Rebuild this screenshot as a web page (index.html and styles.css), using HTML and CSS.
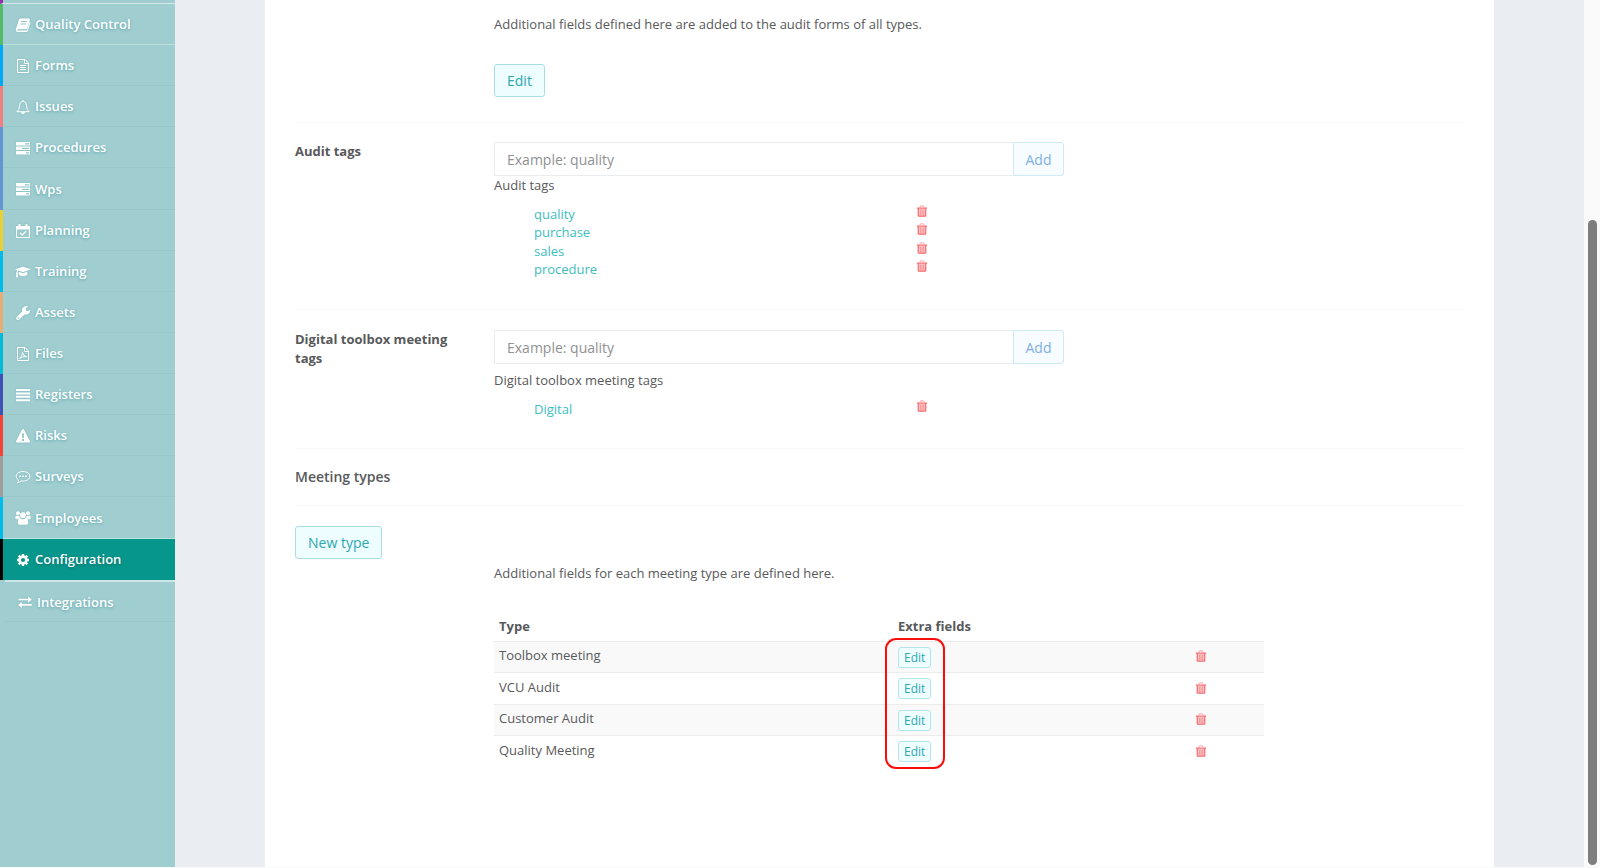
FILE: index.html
```html
<!DOCTYPE html>
<html lang="en">
<head>
<meta charset="utf-8">
<title>Configuration</title>
<link rel="stylesheet" href="styles.css">
</head>
<body>
<svg class="sprite" aria-hidden="true">
  <symbol id="trash" viewBox="0 0 12 14">
    <path d="M4 2.6V1.7q0-.8.8-.8h2.4q.8 0 .8.800v.9" fill="none" stroke="#f99a9d" stroke-width="1"/>
    <path d="M1.500 4h9v7.500q0 1-1 1h-7q-1 0-1-1z" fill="#fbc3c5"/>
    <path d="M2 4v7.200q0 .8.800.8h6.400q.8 0 .8-.800V4M.5 3.400h11" fill="none" stroke="#f57074" stroke-width="1.300"/>
    <path d="M4.400 5v6M6 5v6M7.600 5v6" stroke="#f88e92" stroke-width=".8"/>
  </symbol>
  <symbol id="tasks" viewBox="0 0 16 16">
    <path fill="currentColor" fill-rule="evenodd" d="M1.500 2h13q.5 0 .5.500v2.500q0 .5-.5.500h-13q-.5 0-.5-.500V2.500q0-.5.500-.500zM10 3.200v1.200h4V3.200zM1.500 6.500h13q.5 0 .5.500v2.500q0 .5-.5.500h-13q-.5 0-.5-.500V7q0-.5.500-.500zM7 7.700v1.200h7V7.700zM1.500 11h13q.5 0 .5.500V14q0 .5-.5.500h-13q-.5 0-.5-.500v-2.500q0-.5.500-.500zM11 12.200v1.200h3v-1.200z"/>
  </symbol>
</svg>
<nav class="sidebar">
  <div class="stub"></div>
  <a class="item green light" href="#"><svg class="icon" viewBox="0 0 16 16"><path fill="currentColor" fill-rule="evenodd" d="M5.800 1.500h8q1.300 0 1 1.300l-2.500 8.200q-.4 1.300-1.700 1.300H3q-1 0-.9.700.1.600 1 .6h8.200q.6 0 .8-.600l2.600-8.500q.9.400.6 1.500l-2.400 7.800q-.4 1.200-1.700 1.200H2.900Q1 15 .8 13.200q-.1-.6.100-1.200L3.800 2.900Q4.300 1.500 5.800 1.500zM6.200 4l-.3 1h5.700l.3-1zM5.500 6.400l-.3 1h5.700l.3-1z"/></svg>Quality Control</a>
  <a class="item blue" href="#"><svg class="icon" viewBox="0 0 16 16"><path fill="none" stroke="currentColor" d="M2.500 1.500h7.500l3.500 3.500v9.500h-11zM9.500 1.500v4h4M5 7.500h6M5 9.500h6M5 11.500h6"/></svg>Forms</a>
  <a class="item coral" href="#"><svg class="icon" viewBox="0 0 16 16"><path fill="none" stroke="currentColor" d="M8 2Q4.500 2.500 4.500 6.500q0 4.500-2.700 6.200h12.400Q11.500 11 11.500 6.500 11.500 2.500 8 2zM8 .8V2"/><path fill="currentColor" d="M6 13h4q-.2 2-2 2t-2-2z"/></svg>Issues</a>
  <a class="item steel" href="#"><svg class="icon"><use href="#tasks"/></svg>Procedures</a>
  <a class="item steel tall" href="#"><svg class="icon"><use href="#tasks"/></svg>Wps</a>
  <a class="item yellow" href="#"><svg class="icon" viewBox="0 0 16 16"><path fill="none" stroke="currentColor" stroke-width="1.100" d="M1.600 3.500h12.800v11H1.600zM1.600 6h12.800"/><path fill="currentColor" d="M1.500 3h13v3h-13z"/><path fill="none" stroke="currentColor" stroke-width="2" d="M4.500 1v3.500M11.500 1v3.500"/><path fill="none" stroke="currentColor" stroke-width="1.300" d="M5 9.800l2.200 2.200 4-4"/></svg>Planning</a>
  <a class="item sky" href="#"><svg class="icon" viewBox="0 0 18 16"><path fill="currentColor" d="M9 2l9 3-9 3.200L3.800 6.400q-.9.700-1 2.100.7.600.2 1.500l.5 4H1l.5-4q-.6-.9.200-1.600.1-1.500.8-2.400L0 5zM4.200 7.800L9 9.500l4.800-1.700.2 2.700Q12.500 12.800 9 12.800T4 10.500z"/></svg>Training</a>
  <a class="item sand" href="#"><svg class="icon" viewBox="0 0 16 16"><path fill="currentColor" fill-rule="evenodd" d="M7 6.800Q6.300 3.500 8.800 1.900q2.200-1.400 4.600-.4L10.800 3.300v2l1.800 1 2.600-1.600q.1 3.300-2.400 4.400-1.400.6-3 .1L4.200 14.400q-1.300 1.200-2.500 0t0-2.500zM3.200 12.200a.8.800 0 100 1.600.8.800 0 000-1.600z"/></svg>Assets</a>
  <a class="item cyan" href="#"><svg class="icon" viewBox="0 0 16 16"><path fill="none" stroke="currentColor" d="M2.500 1.500h7.500l3.500 3.500v9.500h-11zM9.500 1.500v4h4"/><path fill="none" stroke="currentColor" stroke-width=".9" d="M4.500 12.500Q7.500 10 7.500 6.500q.5 3.500 4 4.200Q8 9.800 4.500 12.500z"/></svg>Files</a>
  <a class="item indigo" href="#"><svg class="icon" viewBox="0 0 16 16"><path stroke="currentColor" stroke-width="2" d="M1 3h14M1 6.400h14M1 9.800h14M1 13.200h14"/></svg>Registers</a>
  <a class="item red" href="#"><svg class="icon" viewBox="0 0 16 16"><path fill="currentColor" fill-rule="evenodd" d="M8 1q.6 0 .9.500l6 11.500q.7 1.400-.9 1.500H2Q.4 14.400 1.100 13l6-11.500Q7.400 1 8 1zM6.900 5.500l.3 4.500h1.600l.3-4.500zM7 11v1.900h2V11z"/></svg>Risks</a>
  <a class="item grey" href="#"><svg class="icon" viewBox="0 0 16 16"><path fill="none" stroke="currentColor" d="M8 2.500c4 0 6.800 2 6.800 4.800S12 12 8 12q-1 0-1.700-.1-1.800 1.700-4 1.900 1.200-1.300 1.200-2.800Q1.200 9.600 1.200 7.300C1.200 4.500 4 2.500 8 2.500z"/><path stroke="currentColor" stroke-width="1.600" d="M4.200 7.300h1.700M7.200 7.300h1.700M10.200 7.300h1.700"/></svg>Surveys</a>
  <a class="item sky tall light" href="#"><svg class="icon" viewBox="0 0 16 16"><g fill="currentColor"><circle cx="3" cy="3.200" r="2"/><circle cx="13" cy="3.200" r="2"/><circle cx="8" cy="5.200" r="2.900"/><path d="M.3 8.500Q.2 5.300 1.500 5.500q1.500.9 3 .2 0 1.500.7 2.500-1.200 0-2 1H1.500Q.4 9.200.3 8.500zM15.700 8.500q.1-3.200-1.200-3-1.500.9-3 .2 0 1.500-.7 2.500 1.200 0 2 1h1.700q1.100 0 1.200-.700zM5.300 8.300Q8 10.200 10.700 8.300q2.500.2 2.500 4.500 0 1.900-2 1.900H4.800q-2 0-2-1.900 0-4.300 2.500-4.500z"/></g></svg>Employees</a>
  <a class="item active" href="#" aria-current="page"><svg class="icon" viewBox="0 0 16 16"><circle cx="8" cy="8" r="3.400" fill="none" stroke="currentColor" stroke-width="2.600"/><path stroke="currentColor" stroke-width="2.400" d="M8 2v2.400M8 11.600v2.400M2 8h2.400M11.600 8h2.400M3.700 3.700l1.600 1.600M10.700 10.700l1.600 1.600M3.700 12.300l1.600-1.600M10.700 5.300l1.600-1.600"/></svg>Configuration</a>
  <a class="item last" href="#"><svg class="icon" viewBox="0 0 16 16"><path fill="currentColor" d="M1.500 4.700H11V2.500l3.800 3-3.800 3V6.300H1.500zM14.800 10.100H5V7.900l-3.800 3 3.800 3v-2.200h9.800z"/></svg>Integrations</a>
</nav>
<main class="panel">
  <section class="row intro">
    <div></div>
    <div>
      <p>Additional fields defined here are added to the audit forms of all types.</p>
      <button class="btn" type="button">Edit</button>
    </div>
  </section>
  <section class="row audit">
    <label class="label" for="audit-tag">Audit tags</label>
    <div>
      <div class="group"><input id="audit-tag" type="text" placeholder="Example: quality"><button class="add" type="button">Add</button></div>
      <p>Audit tags</p>
      <ul class="tags">
        <li><a href="#">quality</a><button class="del" type="button" aria-label="Delete quality"><svg><use href="#trash"/></svg></button></li>
        <li><a href="#">purchase</a><button class="del" type="button" aria-label="Delete purchase"><svg><use href="#trash"/></svg></button></li>
        <li><a href="#">sales</a><button class="del" type="button" aria-label="Delete sales"><svg><use href="#trash"/></svg></button></li>
        <li><a href="#">procedure</a><button class="del" type="button" aria-label="Delete procedure"><svg><use href="#trash"/></svg></button></li>
      </ul>
    </div>
  </section>
  <section class="row toolbox">
    <label class="label" for="toolbox-tag">Digital toolbox meeting tags</label>
    <div>
      <div class="group"><input id="toolbox-tag" type="text" placeholder="Example: quality"><button class="add" type="button">Add</button></div>
      <p>Digital toolbox meeting tags</p>
      <ul class="tags">
        <li><a href="#">Digital</a><button class="del" type="button" aria-label="Delete Digital"><svg><use href="#trash"/></svg></button></li>
      </ul>
    </div>
  </section>
  <h2 class="heading">Meeting types</h2>
  <section class="types">
    <button class="btn" type="button">New type</button>
    <div class="listing">
      <p>Additional fields for each meeting type are defined here.</p>
      <div class="table-wrap">
        <table>
          <colgroup><col class="c-type"><col class="c-extra"><col></colgroup>
          <thead><tr><th>Type</th><th>Extra fields</th><th></th></tr></thead>
          <tbody>
            <tr><td>Toolbox meeting</td><td><button class="mini" type="button">Edit</button></td><td><button class="del" type="button" aria-label="Delete Toolbox meeting"><svg><use href="#trash"/></svg></button></td></tr>
            <tr><td>VCU Audit</td><td><button class="mini" type="button">Edit</button></td><td><button class="del" type="button" aria-label="Delete VCU Audit"><svg><use href="#trash"/></svg></button></td></tr>
            <tr><td>Customer Audit</td><td><button class="mini" type="button">Edit</button></td><td><button class="del" type="button" aria-label="Delete Customer Audit"><svg><use href="#trash"/></svg></button></td></tr>
            <tr><td>Quality Meeting</td><td><button class="mini" type="button">Edit</button></td><td><button class="del" type="button" aria-label="Delete Quality Meeting"><svg><use href="#trash"/></svg></button></td></tr>
          </tbody>
        </table>
        <div class="highlight"></div>
      </div>
    </div>
  </section>
</main>
<div class="scrollbar"><div class="thumb"></div></div>
</body>
</html>
```
FILE: styles.css
```css
* { box-sizing: border-box; }

body {
  margin: 0;
  display: flex;
  min-height: 100vh;
  background: #eaeef3;
  border-bottom: 1px solid #f8fafb;
  color: #58595b;
  font: 13px/19px "Open Sans", "Noto Sans", sans-serif;
}

p, h2, ul { margin: 0; padding: 0; }
button { font-family: inherit; cursor: pointer; }
.sprite { position: absolute; width: 0; height: 0; }

.sidebar {
  flex: none;
  width: 175px;
  background: #a0cdd0;
}
.stub {
  height: 4px;
  border-left: 3px solid #9c27b0;
  border-bottom: 1px solid #d3eae9;
}
.item {
  display: flex;
  align-items: center;
  gap: 4px;
  height: 41px;
  padding-left: 12px;
  border-left: 3px solid;
  box-shadow: inset 0 -1px #98c6c9;
  color: #fff;
  font-weight: 600;
  text-decoration: none;
  text-shadow: 0 1px 3px #5fa8ac;
}
.icon {
  flex: none;
  width: 16px;
  height: 16px;
  color: #fff;
  filter: drop-shadow(0 0 1px #84bdc0);
}
.tall { height: 42px; }
.light { box-shadow: inset 0 -1px #bbdfda; }
.green { border-left-color: #55b96a; }
.blue { border-left-color: #03a9f4; }
.coral { border-left-color: #f08080; }
.steel { border-left-color: #6495d2; }
.yellow { border-left-color: #e9d035; }
.sky { border-left-color: #00bce9; }
.sand { border-left-color: #e5ae74; }
.cyan { border-left-color: #00bcd4; }
.indigo { border-left-color: #3f51b5; }
.red { border-left-color: #f44336; }
.grey { border-left-color: #9e9e9e; }
.active {
  border-left-color: #000;
  background: #07968c;
  box-shadow: none;
  text-shadow: 0 1px 3px #056e67;
}
.active .icon { filter: none; }
.last {
  height: 42px;
  margin-left: 5px;
  border-left: 0;
  border-top: 2px solid #cfe6e8;
}

.panel {
  flex: 1;
  min-width: 0;
  margin: 0 90px;
  padding: 0 30px;
  background: #fff;
}
.row {
  display: grid;
  grid-template-columns: 199px minmax(0, 570px);
  border-bottom: 1px solid #f7f7f8;
}
.intro { padding: 15px 0 25px; }
.intro .btn { margin-top: 30px; }
.audit { padding: 19px 0 30px; }
.toolbox { padding: 20px 0 30px; }
.toolbox .group { margin-bottom: 7px; }
.label { padding-right: 40px; font-weight: 700; }

.btn {
  display: block;
  height: 33px;
  padding: 0 12px;
  border: 1px solid #a9dfe4;
  border-radius: 3px;
  background: #eefdff;
  color: #2ba7ad;
  font-size: 14px;
}
.group { display: flex; height: 34px; }
.group input {
  flex: 1;
  min-width: 0;
  padding: 0 12px;
  border: 1px solid #ebeced;
  border-right: 0;
  background: #fff;
  color: #58595b;
  font: 14px "Open Sans", "Noto Sans", sans-serif;
}
.group input::placeholder { color: #909193; opacity: 1; }
.add {
  width: 51px;
  padding: 0;
  border: 1px solid #cfeaf5;
  border-radius: 0 3px 3px 0;
  background: #f6fcff;
  color: #7fb0e0;
  font-size: 14px;
}

.tags { margin-top: 10px; padding-left: 40px; list-style: none; }
.tags li {
  display: grid;
  grid-template-columns: 382px auto;
  justify-content: start;
  height: 18px;
}
.tags li:nth-child(even) { height: 19px; }
.tags a { color: #3dbdc0; text-decoration: none; }
.del {
  display: block;
  width: 12px;
  height: 13px;
  padding: 0;
  border: 0;
  background: none;
}
.del svg { display: block; width: 12px; height: 13px; }

.heading {
  padding: 18px 0 19px;
  border-bottom: 1px solid #f7f7f8;
  font-size: 14px;
  line-height: 19px;
  font-weight: 600;
}
.types { padding-top: 20px; }
.listing { padding-left: 199px; padding-top: 5px; }
.table-wrap { position: relative; max-width: 770px; margin-top: 29px; }
table { width: 100%; border-collapse: collapse; table-layout: fixed; }
.c-type { width: 399px; }
.c-extra { width: 297px; }
th, td { padding: 0 5px; text-align: left; vertical-align: middle; }
th { height: 29px; }
td { height: 31px; border-top: 1px solid #ececed; }
td:first-child { padding-bottom: 2px; }
td:nth-child(2) { padding-top: 1px; }
tbody tr:nth-child(even) td { height: 32px; }
tbody tr:nth-child(odd) { background: #f9f9f9; }
.mini {
  display: block;
  height: 21px;
  padding: 0 5px;
  border: 1px solid #b5e5e9;
  border-radius: 3px;
  background: #eefdff;
  color: #2ba7ad;
  font-size: 12px;
}
.highlight {
  position: absolute;
  left: 391px;
  top: 26px;
  width: 60px;
  height: 131px;
  border: 2px solid #f90d0a;
  border-radius: 11px;
  pointer-events: none;
}

.scrollbar {
  display: flex;
  flex: none;
  width: 16px;
  padding: 220px 3px 2px 4px;
  background: #fafafa;
}
.thumb { flex: 1; border-radius: 5px; background: #7e7e7e; }
```
